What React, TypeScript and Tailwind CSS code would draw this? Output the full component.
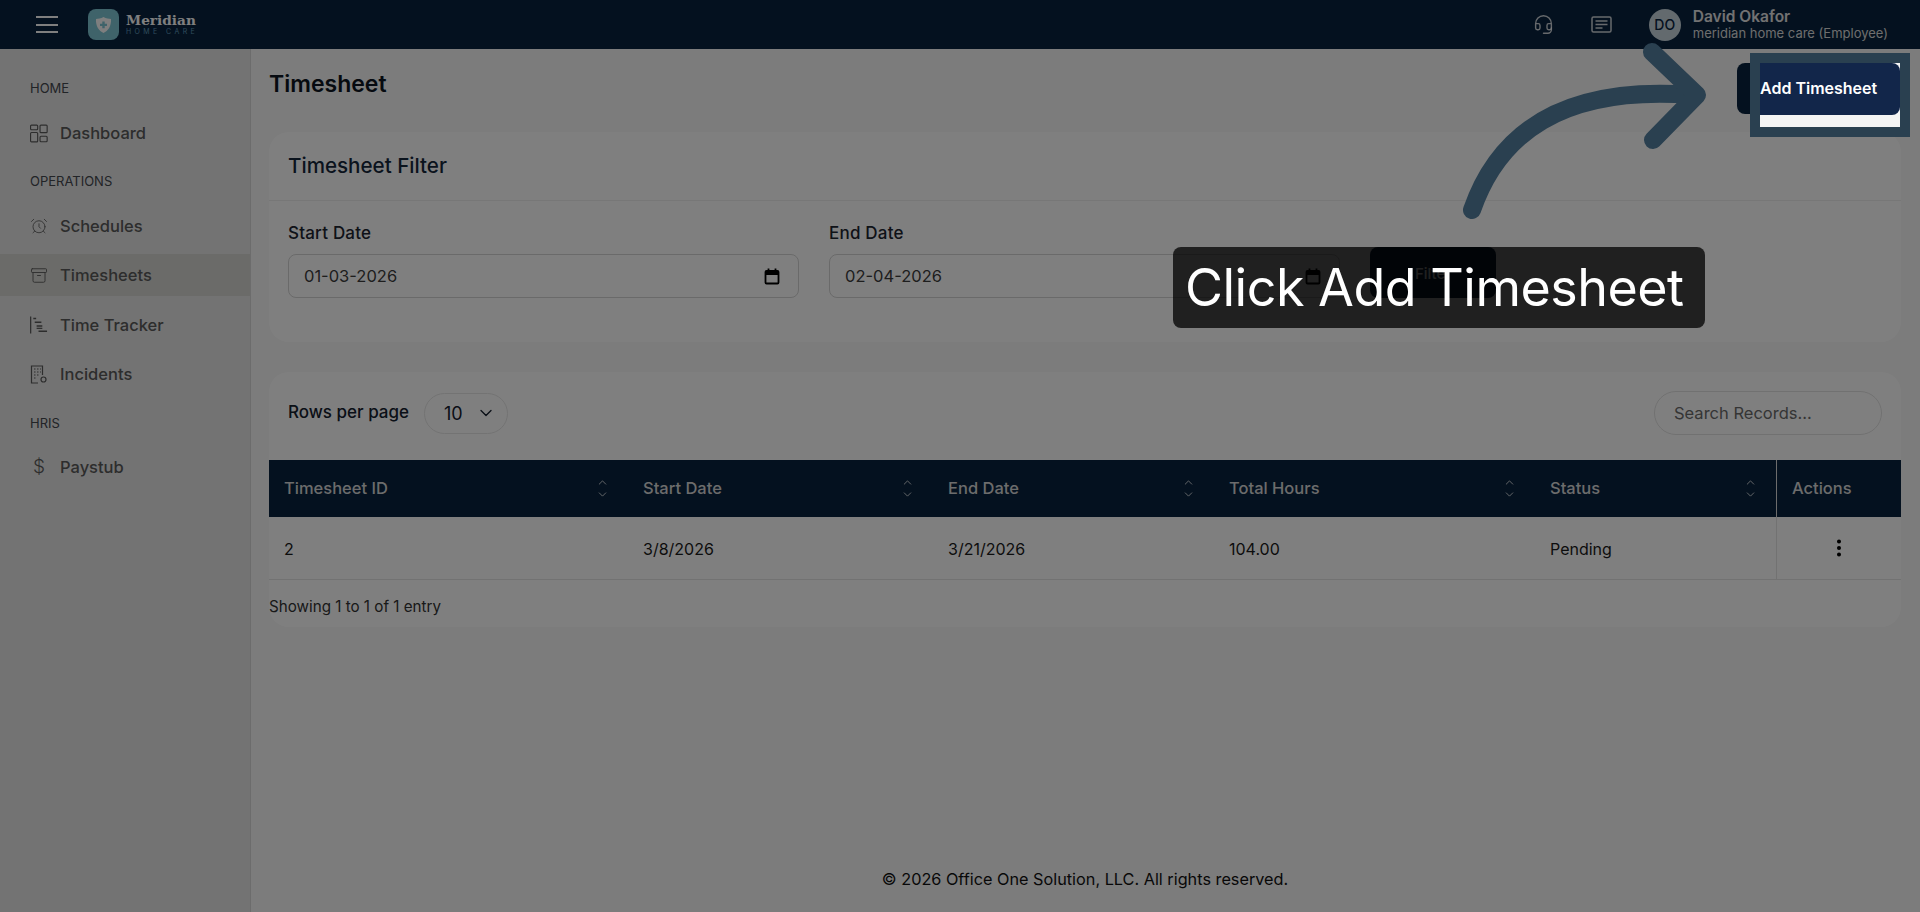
import { Archive, AlarmClock, ChevronDown, ChevronUp, EllipsisVertical, Headset } from 'lucide-react';

const columns = [
  { label: 'Timesheet ID', value: '2' },
  { label: 'Start Date', value: '3/8/2026' },
  { label: 'End Date', value: '3/21/2026' },
  { label: 'Total Hours', value: '104.00' },
  { label: 'Status', value: 'Pending' },
];

const DashboardIcon = () => (
  <svg width="19" height="19" viewBox="0 0 19 19" fill="none" stroke="currentColor" strokeWidth="1.2">
    <rect x="0.6" y="0.6" width="7.5" height="5" rx="1" />
    <rect x="10.6" y="0.6" width="7.5" height="8" rx="1" />
    <rect x="0.6" y="8.4" width="7.5" height="10" rx="1" />
    <rect x="10.6" y="12.4" width="7.5" height="5.8" rx="1" />
  </svg>
);

const TrackerIcon = () => (
  <svg width="19" height="19" viewBox="0 0 19 19" fill="none" stroke="currentColor" strokeWidth="1.3">
    <path d="M0.7 0v18" />
    <path d="M3.5 2h3M5 6h7M7 10h6M9 15.500h9" strokeWidth="1.6" />
    <path d="M7 12.500h6" />
  </svg>
);

const IncidentIcon = () => (
  <svg width="18" height="19" viewBox="0 0 18 19" fill="none" stroke="currentColor" strokeWidth="1.2">
    <path d="M8 18H1.500V1h11v9" />
    <path d="M4 4h1.500M7 4h1.500M10 4h1M4 7h1.500M7 7h1.500M10 7h1M4 10h1.500M7 10h1.500M4 13h1.500" />
    <circle cx="13.500" cy="14.500" r="2.500" />
  </svg>
);

const CalendarIcon = () => (
  <svg width="16" height="17" viewBox="0 0 16 17" fill="none" stroke="#000" strokeWidth="1.800">
    <rect x="1.500" y="3" width="13" height="12.500" rx="1" />
    <path d="M1.500 5.500h13" strokeWidth="3" />
    <path d="M4.500 0.500v2.500M11.500 0.500v2.500" />
  </svg>
);

function NavLabel({ children }: { children: string }) {
  return <div className="pl-[30px] text-[13px] leading-[20px] text-[#44484f]">{children}</div>;
}

function NavItem({ icon, label, active }: { icon: React.ReactNode; label: string; active?: boolean }) {
  return (
    <div className={`flex h-[42px] items-center gap-[12px] pl-[30px] text-[#5a5a5a] ${active ? 'bg-[#d6d6d2]' : ''}`}>
      <span className="flex w-[18px] justify-center">{icon}</span>
      <span className="text-[16.500px] font-medium">{label}</span>
    </div>
  );
}

function DateField({ label, value }: { label: string; value: string }) {
  return (
    <div className="w-[511px]">
      <div className="mb-[11px] text-[17px] font-medium leading-[20px] tracking-[0.200px] text-[#1c2430]">{label}</div>
      <div className="flex h-[44px] items-center justify-between rounded-lg border border-[#d4d4d4] bg-white pl-[15px] pr-[18px] text-[16.500px] text-[#3c3c3c]">
        {value}
        <CalendarIcon />
      </div>
    </div>
  );
}

export default function App() {
  return (
    <div className="relative flex h-screen flex-col overflow-hidden bg-[#f8f8f8] font-['Inter',sans-serif]">
      {/* top bar */}
      <header className="flex h-[49px] shrink-0 items-center bg-[#08233f] pl-[36px] pr-[32px]">
        <div className="flex w-[22px] flex-col gap-[5.500px]">
          <span className="h-[2px] bg-white" />
          <span className="h-[2px] bg-white" />
          <span className="h-[2px] bg-white" />
        </div>
        <div className="ml-[30px] flex h-[31px] w-[31px] items-center justify-center rounded-lg bg-[#7fc7d4]">
          <svg width="17" height="18" viewBox="0 0 17 18">
            <path d="M8.500 1 C11 3 14 2.500 16 3 C16.500 10 13 15 8.500 17 C4 15 0.500 10 1 3 C3 2.500 6 3 8.500 1Z" fill="#fff" />
            <path d="M7.300 5.500h2.400v2.200h2.300v2.400H9.700v2.200H7.300v-2.200H5V7.700h2.300z" fill="#7fc7d4" />
          </svg>
        </div>
        <div className="ml-[7px]">
          <div className="font-['DejaVu_Serif',serif] text-[13.700px] font-bold leading-[14px] text-white">Meridian</div>
          <div className="text-[7px] leading-[10px] tracking-[3.400px] text-[#5f97b8]">HOME CARE</div>
        </div>
        <div className="ml-auto flex items-center text-white/80">
          <Headset size={21} strokeWidth={1.600} />
          <svg className="ml-[37px]" width="21" height="17" viewBox="0 0 21 17" fill="none" stroke="currentColor" strokeWidth="1.500">
            <rect x="1" y="1" width="19" height="15" rx="1.500" />
            <path d="M4.500 5h12M4.500 8.500h12M4.500 12h7" />
          </svg>
          <div className="ml-[37px] flex h-[32px] w-[32px] items-center justify-center rounded-full bg-[#c6d4dc] text-[14px] font-medium text-[#08233f]">DO</div>
          <div className="ml-[12px]">
            <div className="text-[15.500px] font-semibold leading-[17px] text-[#e4e4e4]">David Okafor</div>
            <div className="text-[13px] leading-[16px] text-[#dcdcdc]">meridian home care (Employee)</div>
          </div>
        </div>
      </header>

      <div className="flex min-h-0 flex-1">
        {/* sidebar */}
        <aside className="w-[251px] shrink-0 border-r border-[#d8d8d8] bg-[#e6e6e6] pt-[29px]">
          <NavLabel>HOME</NavLabel>
          <div className="mt-[14px]"><NavItem icon={<DashboardIcon />} label="Dashboard" /></div>
          <div className="mt-[17px]"><NavLabel>OPERATIONS</NavLabel></div>
          <div className="mt-[14px]"><NavItem icon={<AlarmClock size={24} strokeWidth={1.100} />} label="Schedules" /></div>
          <div className="mt-[7px]"><NavItem icon={<Archive size={23} strokeWidth={1.200} />} label="Timesheets" active /></div>
          <div className="mt-[8px]"><NavItem icon={<TrackerIcon />} label="Time Tracker" /></div>
          <div className="mt-[7px]"><NavItem icon={<IncidentIcon />} label="Incidents" /></div>
          <div className="mt-[18px]"><NavLabel>HRIS</NavLabel></div>
          <div className="mt-[13px]"><NavItem icon={<span className="text-[19px] font-light">$</span>} label="Paystub" /></div>
        </aside>

        {/* main content */}
        <main className="flex min-w-0 flex-1 flex-col pl-[18px] pr-[19px]">
          <div className="flex h-[83px] shrink-0 items-start justify-between">
            <h1 className="mt-[19px] text-[23px] font-semibold leading-[32px] text-[#0d1520]">Timesheet</h1>
            <button className="mt-[14px] h-[51px] w-[164px] rounded-lg bg-[#08233f]" />
          </div>

          <section className="h-[210px] shrink-0 rounded-[20px] bg-white">
            <div className="flex h-[69px] items-center border-b border-[#eeeeee] pl-[19px] text-[20.600px] font-medium text-[#14263a]">Timesheet Filter</div>
            <div className="flex items-end gap-[30px] pl-[19px] pt-[22px]">
              <DateField label="Start Date" value="01-03-2026" />
              <DateField label="End Date" value="02-04-2026" />
              <button className="h-[51px] w-[126px] rounded-lg bg-[#08233f] pt-[3px] text-[15px] font-medium text-white">Filter</button>
            </div>
          </section>

          <section className="mt-[30px] h-[255px] shrink-0 overflow-hidden rounded-[20px] bg-white">
            <div className="flex h-[88px] items-center justify-between pb-[6px] pl-[19px] pr-[19px]">
              <div className="flex items-center gap-[15px]">
                <span className="text-[17px] font-medium text-[#14202e]">Rows per page</span>
                <div className="flex h-[41px] w-[84px] items-center justify-between rounded-full border border-[#e6e6e6] pl-[19px] pr-[11px] text-[18px] text-[#14202e]">
                  10
                  <ChevronDown size={20} strokeWidth={1.600} />
                </div>
              </div>
              <div className="flex h-[44px] w-[228px] items-center rounded-full border border-[#e2e2e2] pl-[19px] text-[16.500px] text-[#6b6b6b]">Search Records...</div>
            </div>
            <div className="grid grid-cols-[359px_305px_281px_321px_241px_1fr]">
              {columns.map((col) => (
                <div key={col.label} className="flex h-[57px] items-center justify-between bg-[#08233f] pb-[1px] pl-[15px] pr-[19px] text-[16.500px] font-medium text-[#d8d8d8]">
                  {col.label}
                  <span className="flex flex-col text-[#f0f0f0]">
                    <ChevronUp size={13} strokeWidth={1.500} className="-mb-[1px]" />
                    <ChevronDown size={13} strokeWidth={1.500} />
                  </span>
                </div>
              ))}
              <div className="flex h-[57px] items-center border-l border-[#d8d8d8] bg-[#08233f] pb-[1px] pl-[15px] text-[16.500px] font-medium text-[#d8d8d8]">Actions</div>
              {columns.map((col) => (
                <div key={col.label} className="flex h-[63px] items-center border-b border-[#e4e4e4] pl-[15px] pt-[2px] text-[16px] text-[#1a1a1a]">{col.value}</div>
              ))}
              <div className="flex h-[63px] items-center justify-center border-b border-l border-[#e4e4e4] text-black">
                <EllipsisVertical size={22} strokeWidth={2.400} />
              </div>
            </div>
            <div className="mt-[17px] text-[15.200px] leading-[20px] text-[#333333]">Showing 1 to 1 of 1 entry</div>
          </section>

          <footer className="mt-auto pb-[23px] text-center text-[16.250px] leading-[20px] text-[#111111]">© 2026 Office One Solution, LLC. All rights reserved.</footer>
        </main>
      </div>

      {/* walkthrough overlay */}
      <div className="absolute inset-0 bg-black/50" />
      <svg className="absolute left-[1460px] top-[40px]" width="260" height="185" viewBox="0 0 260 185" fill="none" stroke="#2a4050" strokeWidth="18" strokeLinecap="round" strokeLinejoin="round">
        <path d="M12 170 C38 95 100 45 232 55" />
        <path d="M192 12 L237 55 L193 100" />
      </svg>
      <div className="absolute left-[1750px] top-[53px] h-[84px] w-[160px] border-[10px] border-[#2a4050]">
        <div className="h-full overflow-hidden bg-[#f4f4f4]">
          <div className="flex h-[52px] items-center rounded-r-lg bg-[#12264a] pb-[2px] text-[16px] font-semibold text-white">Add Timesheet</div>
        </div>
      </div>
      <div className="absolute left-[1173px] top-[247px] flex h-[81px] w-[532px] items-center whitespace-nowrap rounded-lg bg-black/75 pl-[12px] text-[52px] font-normal tracking-[-0.500px] text-white">Click Add Timesheet</div>
    </div>
  );
}
